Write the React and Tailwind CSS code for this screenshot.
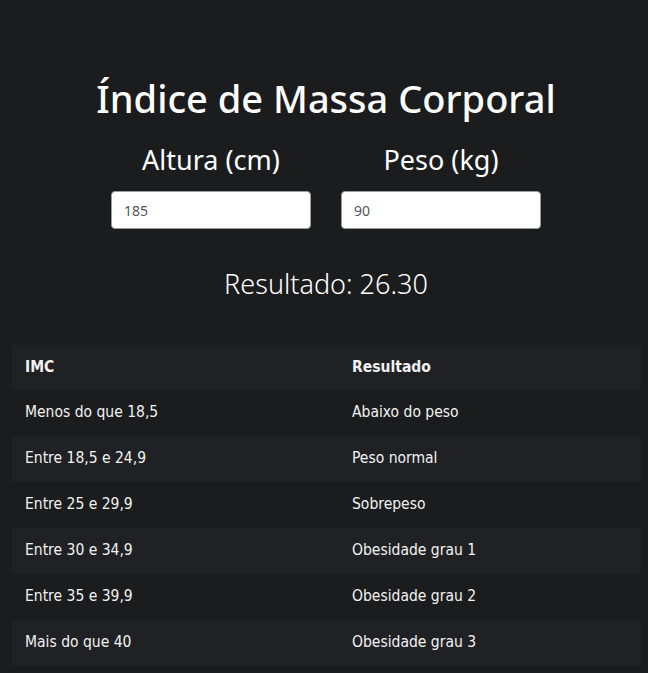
const rows = [
  ['Menos do que 18,5', 'Abaixo do peso'],
  ['Entre 18,5 e 24,9', 'Peso normal'],
  ['Entre 25 e 29,9', 'Sobrepeso'],
  ['Entre 30 e 34,9', 'Obesidade grau 1'],
  ['Entre 35 e 39,9', 'Obesidade grau 2'],
  ['Mais do que 40', 'Obesidade grau 3'],
];

function Field({ label, value }) {
  return (
    <div className="flex flex-col items-center w-[200px]">
      <label className="text-[27px] leading-[36px] text-white mb-[13px]">{label}</label>
      <input
        readOnly
        value={value}
        className="w-full h-[38px] rounded-[4px] border border-[#9a9a9a] bg-white px-[12px] text-[14px] text-[#555] outline-none"
      />
    </div>
  );
}

export default function App() {
  return (
    <div className="min-h-[673px] bg-[#1b1c1e] text-white font-['Noto_Sans',sans-serif] pt-[71px] pl-[12px]">
      <h1 className="text-center w-[628px] text-[38px] leading-[54px] font-medium">Índice de Massa Corporal</h1>
      <div className="flex justify-center gap-[30px] mt-[17px] w-[628px]">
        <Field label="Altura (cm)" value="185" />
        <Field label="Peso (kg)" value="90" />
      </div>
      <p className="text-center w-[628px] text-[27px] leading-[38px] font-light mt-[36px]">Resultado: 26.30</p>
      <table className="w-[629px] mt-[42px] text-[15.5px] font-['DejaVu_Sans',sans-serif] [font-stretch:condensed] text-[#f2f2f2] border-collapse">
        <thead>
          <tr className="bg-[#202124] h-[45px]">
            <th className="text-left font-bold px-[13px] w-[327px]">IMC</th>
            <th className="text-left font-bold px-[13px]">Resultado</th>
          </tr>
        </thead>
        <tbody>
          {rows.map(([imc, res], i) => (
            <tr key={imc} className={i % 2 === 1 ? 'bg-[#202124] h-[46px]' : 'bg-[#1b1c1e] h-[46px]'}>
              <td className="px-[13px]">{imc}</td>
              <td className="px-[13px]">{res}</td>
            </tr>
          ))}
        </tbody>
      </table>
    </div>
  );
}
